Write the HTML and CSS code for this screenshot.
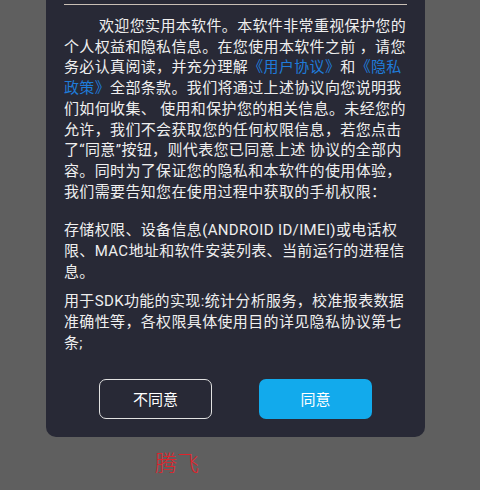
FILE: index.html
```html
<!DOCTYPE html>
<html lang="zh-CN">
<head>
<meta charset="utf-8">
<title>隐私政策</title>
<link rel="stylesheet" href="styles.css">
</head>
<body>
<div class="dialog">
  <div class="divider"></div>
  <div class="content">
    <p class="para intro">欢迎您实用本软件。本软件非常重视保护您的<br>个人权益和隐私信息。在您使用本软件之前 ，请您<br>务必认真阅读，并充分理解<span class="link">《用户协议》</span>和<span class="link">《隐私<br>政策》</span>全部条款。我们将通过上述协议向您说明我<br>们如何收集、 使用和保护您的相关信息。未经您的<br>允许，我们不会获取您的任何权限信息，若您点击<br>了“同意”按钮，则代表您已同意上述 协议的全部内<br>容。同时为了保证您的隐私和本软件的使用体验，<br>我们需要告知您在使用过程中获取的手机权限：</p>
    <p class="para perms">存储权限、设备信息(ANDROID ID/IMEI)或电话权<br>限、MAC地址和软件安装列表、当前运行的进程信<br>息。</p>
    <p class="para sdk">用于SDK功能的实现:统计分析服务，校准报表数据<br>准确性等，各权限具体使用目的详见隐私协议第七<br>条;</p>
  </div>
  <div class="actions">
    <button class="btn btn-outline">不同意</button>
    <button class="btn btn-primary">同意</button>
  </div>
</div>
<div class="brand">腾飞</div>
</body>
</html>
```
FILE: styles.css
```css
html, body {
  margin: 0;
  padding: 0;
}
body {
  width: 480px;
  height: 490px;
  background: #5f5f5f;
  font-family: Roboto, "Noto Sans CJK SC", sans-serif;
  overflow: hidden;
}
.dialog {
  margin-left: 46px;
  width: 379px;
  box-sizing: border-box;
  background: #282936;
  border-radius: 0 0 10px 10px;
  padding: 4px 18px 18px 18px;
}
.divider {
  height: 1px;
  background: #c9bfb5;
}
.content {
  padding-top: 11px;
  color: #efefef;
  font-size: 15px;
  letter-spacing: 0.35px;
  line-height: 20.7px;
}
.para {
  margin: 0;
  white-space: nowrap;
}
.intro {
  text-indent: 35px;
}
.perms {
  margin-top: 18px;
}
.sdk {
  margin-top: 9px;
}
.link {
  color: #1f7bd9;
}
.actions {
  display: flex;
  justify-content: center;
  gap: 47px;
  margin-top: 25px;
}
.btn {
  width: 113px;
  height: 40px;
  box-sizing: border-box;
  border-radius: 7px;
  font-family: Roboto, "Noto Sans CJK SC", sans-serif;
  font-size: 15px;
  color: #ffffff;
  padding: 0;
}
.btn-outline {
  background: transparent;
  border: 1px solid #e2e2e2;
}
.btn-primary {
  background: #12aaec;
  border: none;
}
.brand {
  margin-left: 155px;
  margin-top: 14px;
  font-family: "Liberation Serif", "Noto Sans CJK SC", serif;
  font-size: 22px;
  line-height: 26px;
  color: #e0242c;
  font-weight: 300;
}
```
